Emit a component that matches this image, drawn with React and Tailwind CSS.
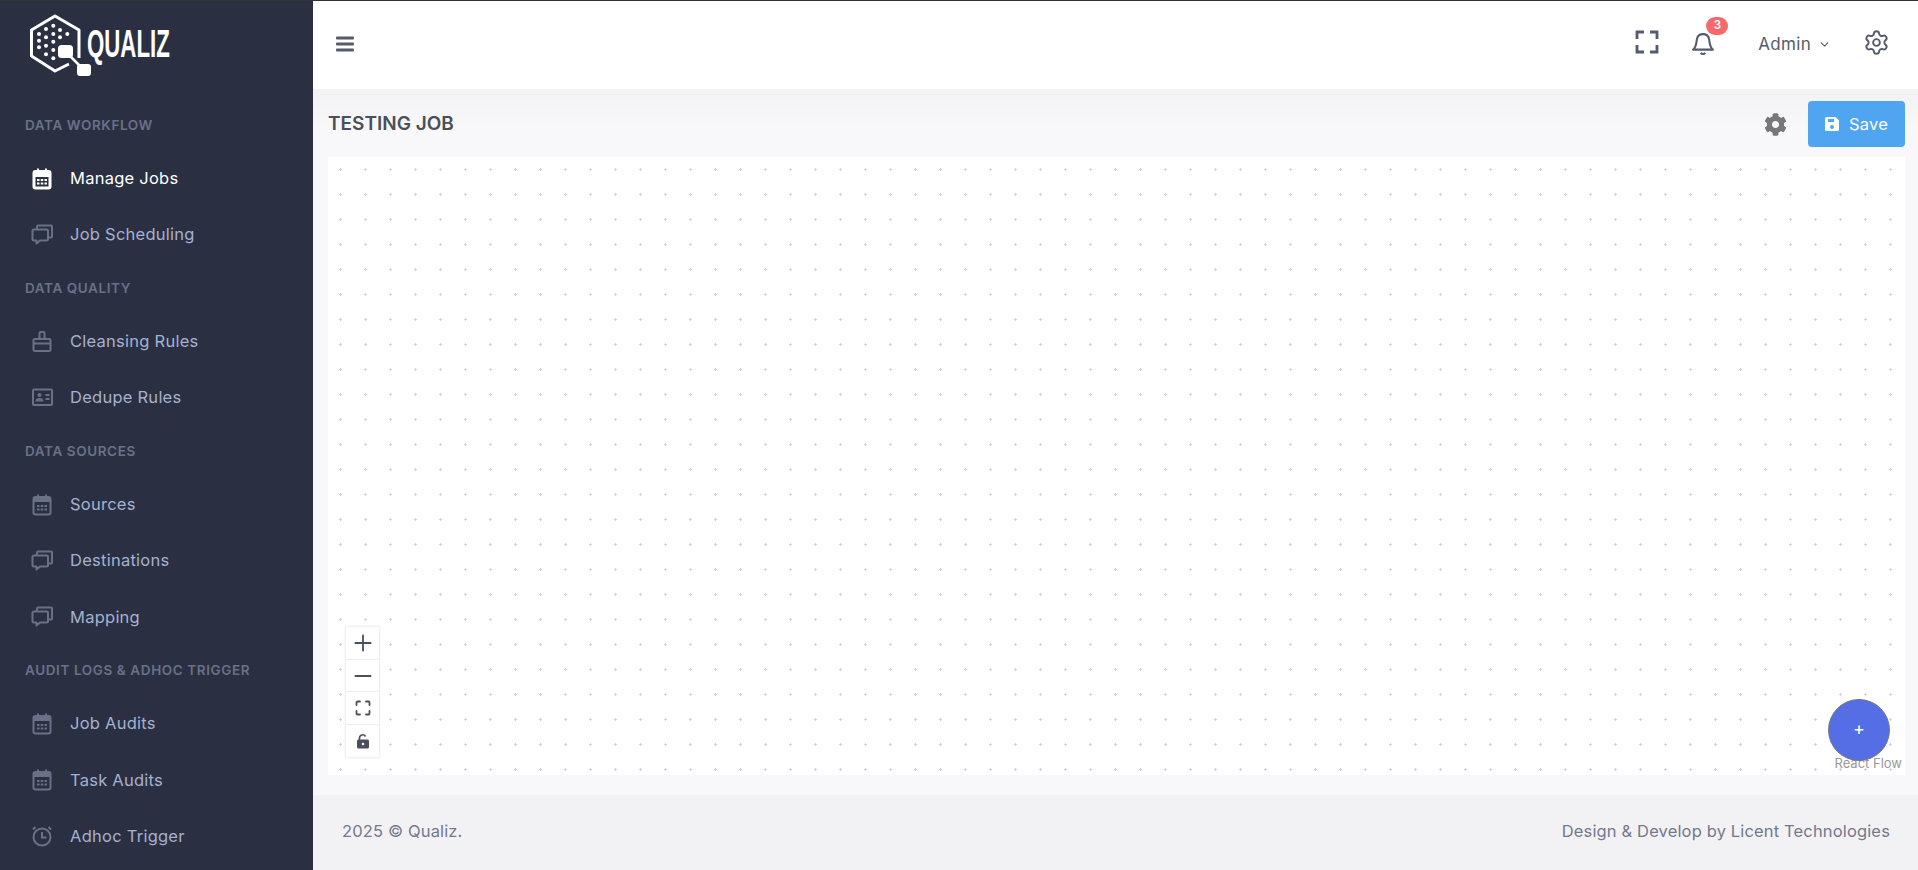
import React from "react";
import { ChevronDown, Plus, Minus, Settings } from "lucide-react";
import { FaCog } from "react-icons/fa";

const CalendarIcon = ({ solid }) => (
  <svg width="24" height="24" viewBox="0 0 24 24" fill="none">
    <rect x="3.500" y="4" width="17" height="17.500" rx="2" fill={solid ? "currentColor" : "none"} stroke="currentColor" strokeWidth="2" />
    <path d="M8 1.500v4M16 1.500v4" stroke="currentColor" strokeWidth="2" />
    {solid ? (
      <rect x="5.500" y="10" width="13" height="9.500" fill="#2a3042" />
    ) : (
      <rect x="4" y="5" width="16" height="4" fill="currentColor" />
    )}
    <path d="M7 13h2.500M10.750 13h2.500M14.500 13h2.500M7 16.500h2.500M10.750 16.500h2.500M14.500 16.500h2.500" stroke={solid ? "#fff" : "currentColor"} strokeWidth="1.800" />
  </svg>
);

const ChatIcon = () => (
  <svg width="24" height="24" viewBox="0 0 24 24" fill="none" stroke="currentColor" strokeWidth="2">
    <path d="M4 6.500h12.500a1.500 1.500 0 0 1 1.500 1.500v8a1.500 1.500 0 0 1-1.500 1.500H10l-3.500 3V17.500H4A1.500 1.500 0 0 1 2.500 16V8A1.500 1.500 0 0 1 4 6.500z" strokeLinejoin="round" />
    <path d="M7 6.500V3.500A1 1 0 0 1 8 2.500h13A1 1 0 0 1 22 3.500v10a1 1 0 0 1-1 1h-3" />
  </svg>
);

const BrushIcon = () => (
  <svg width="24" height="24" viewBox="0 0 24 24" fill="none" stroke="currentColor" strokeWidth="2">
    <rect x="3.500" y="9" width="17" height="12" rx="1.500" />
    <path d="M3.500 13.500h17M9.500 9V3.500a1.500 1.500 0 0 1 1.500-1.500h2a1.500 1.500 0 0 1 1.500 1.500V9" />
  </svg>
);

const CardIcon = () => (
  <svg width="24" height="24" viewBox="0 0 24 24" fill="none">
    <rect x="3" y="3.500" width="19" height="15.500" rx="1" stroke="currentColor" strokeWidth="2" />
    <circle cx="9.500" cy="9" r="2" fill="currentColor" />
    <path d="M5.500 15.500c0-2.500 1.500-3.500 4-3.500s4 1 4 3.500z" fill="currentColor" />
    <path d="M15.500 9h4M15.500 13h4" stroke="currentColor" strokeWidth="2" />
  </svg>
);

const AlarmIcon = () => (
  <svg width="24" height="24" viewBox="0 0 24 24" fill="none" stroke="currentColor" strokeWidth="2">
    <circle cx="12" cy="13" r="8.500" />
    <path d="M12 8v5.500h4.500M3 5.500l2.500-2.500M21 5.500L18.500 3" />
  </svg>
);

const logoDots = [[100, 62], [78, 72], [120, 75], [57, 87], [100, 87], [142, 87], [78, 97], [120, 97], [57, 107], [100, 110], [78, 122], [57, 127], [100, 135], [78, 148], [100, 160]];

const Logo = () => (
  <svg width="70" height="68" viewBox="0 0 70 68" fill="none">
    <path d="M51 44V16L27 2 3.500 16V42L27 57l14-7" stroke="#fff" strokeWidth="3" strokeLinejoin="round" />
    {logoDots.map(([x, y]) => (
      <circle key={`${x}-${y}`} cx={x / 3 - 8} cy={y / 3 - 9} r="2" fill="#fff" />
    ))}
    <rect x="30" y="31" width="15" height="13" rx="3.500" fill="#fff" />
    <rect x="49" y="50" width="14" height="12" rx="3" fill="#fff" />
    <path d="M40 40L54 54" stroke="#fff" strokeWidth="2.500" />
  </svg>
);

const menu = [
  { title: "DATA WORKFLOW", items: [["Manage Jobs", CalendarIcon, true], ["Job Scheduling", ChatIcon]] },
  { title: "DATA QUALITY", items: [["Cleansing Rules", BrushIcon], ["Dedupe Rules", CardIcon]] },
  { title: "DATA SOURCES", items: [["Sources", CalendarIcon], ["Destinations", ChatIcon], ["Mapping", ChatIcon]] },
  { title: "AUDIT LOGS & ADHOC TRIGGER", items: [["Job Audits", CalendarIcon], ["Task Audits", CalendarIcon], ["Adhoc Trigger", AlarmIcon]] },
];

const Sidebar = () => (
  <aside className="w-[313px] shrink-0 bg-[#2a3042] flex flex-col overflow-hidden">
    <div className="h-[99px] shrink-0 pl-[28px] pt-[13px] flex items-start relative">
      <Logo />
      <span className="absolute left-[87px] top-[20px] text-white text-[39px] leading-[46px] font-bold font-['Liberation_Sans'] scale-x-[0.57] origin-left">QUALIZ</span>
    </div>
    {menu.map((section) => (
      <div key={section.title}>
        <div className="h-[50.400px] flex items-center pl-[25px] text-[13.500px] font-semibold tracking-[0.6px] text-[#6a7187]">{section.title}</div>
        {section.items.map(([label, Icon, active]) => (
          <div key={label} className={`h-[56.300px] flex items-center pl-[30px] text-[16.500px] tracking-[0.25px] ${active ? "text-white" : "text-[#a6b0cf]"}`}>
            <span className={active ? "text-white w-[40px]" : "text-[#6a7187] w-[40px]"}><Icon solid={active} /></span>
            <span>{label}</span>
          </div>
        ))}
      </div>
    ))}
  </aside>
);

const Header = () => (
  <header className="h-[88px] shrink-0 bg-white flex items-center pl-[24px] text-[#555b6d]">
    <svg width="18" height="16" viewBox="0 0 18 16" className="ml-[-1px] mb-[2px]" fill="#555b6d">
      <rect y="0.500" width="18" height="3" rx="1" />
      <rect y="6.500" width="18" height="3" rx="1" />
      <rect y="12.500" width="18" height="3" rx="1" />
    </svg>
    <div className="ml-auto flex items-center mb-[6px]">
      <svg width="24" height="24" viewBox="0 0 24 24" fill="none" stroke="#555b6d" strokeWidth="2.800" className="mr-[30px]">
        <path d="M9 2H2v7M15 2h7v7M2 15v7h7M22 15v7h-7" />
      </svg>
      <div className="relative mr-[41px]">
        <svg width="28" height="28" viewBox="0 0 24 24" fill="none" stroke="#555b6d" strokeWidth="1.800">
          <path d="M3.500 18.500c1.500-1 2.500-3.500 3-7l.3-2a5.300 5.300 0 0 1 10.400 0l.3 2c.5 3.500 1.500 6 3 7z" strokeLinejoin="round" />
          <path d="M10 21.500c1 1 3 1 4 0" />
        </svg>
        <span className="absolute left-[17px] top-[-11px] w-[22px] h-[18px] rounded-full bg-[#f46a6a] text-white text-[11.500px] font-semibold flex items-center justify-center">3</span>
      </div>
      <span className="text-[17px] tracking-[0.3px] mr-[7px] mt-[5px]">Admin</span>
      <ChevronDown size={13} className="mr-[32px] mt-[5px]" />
      <Settings size={27} strokeWidth={1.700} className="mr-[28px]" />
    </div>
  </header>
);

const Canvas = () => (
  <div className="relative h-[618px] ml-[15px] mr-[13px] bg-white bg-[radial-gradient(#d2d2d6_1px,transparent_1.100px)] bg-[size:25px_25px]">
    <div className="absolute left-[18px] bottom-[18px] w-[33px] bg-white shadow-[0_0_2px_1px_rgba(0,0,0,0.08)] text-[#4a4f5c]">
      <button className="h-[33px] w-full flex items-center justify-center border-b border-[#eee]"><Plus size={26} strokeWidth={1.700} /></button>
      <button className="h-[32px] w-full flex items-center justify-center border-b border-[#eee]"><Minus size={26} strokeWidth={1.700} /></button>
      <button className="h-[33px] w-full flex items-center justify-center border-b border-[#eee]">
        <svg width="16" height="16" viewBox="0 0 16 16" fill="none" stroke="#4a4f5c" strokeWidth="1.800" strokeLinecap="round"><path d="M5 1.500H2.500a1 1 0 0 0-1 1V5M11 1.500h2.500a1 1 0 0 1 1 1V5M1.500 11v2.500a1 1 0 0 0 1 1H5M14.500 11v2.500a1 1 0 0 1-1 1H11" /></svg>
      </button>
      <button className="h-[32px] w-full flex items-center justify-center">
        <svg width="14" height="15" viewBox="0 0 14 15" fill="#4a4f5c"><path d="M1 7a1.500 1.500 0 0 1 1.500-1.500h9A1.500 1.500 0 0 1 13 7v6a1.500 1.500 0 0 1-1.500 1.500h-9A1.500 1.500 0 0 1 1 13z" /><path d="M3.500 6V4a3.200 3.200 0 0 1 6-1.500" fill="none" stroke="#4a4f5c" strokeWidth="1.600" /><circle cx="7" cy="10" r="1.300" fill="#fff" /></svg>
      </button>
    </div>
    <span className="absolute right-[3px] bottom-[4px] text-[13px] leading-[16px] text-[#999]">React Flow</span>
    <button className="absolute right-[15px] bottom-[14px] w-[62px] h-[62px] rounded-full bg-[#556ee6] border border-[#777] text-white text-[18px] flex items-center justify-center pb-[3px]">+</button>
  </div>
);

export default function App() {
  return (
    <div className="h-[870px] overflow-hidden flex flex-col font-['Inter',sans-serif] bg-white">
      <div className="h-px shrink-0 bg-[#333]"></div>
      <div className="flex flex-1 min-h-0">
        <Sidebar />
        <div className="flex-1 flex flex-col min-w-0 bg-[#f8f8fb]">
          <Header />
          <div className="flex-1 bg-gradient-to-b from-[#f2f2f5] to-[#f8f8fb] bg-[length:100%_40px] bg-no-repeat">
            <div className="h-[68px] flex items-center pl-[15px] pr-[13px] pt-[2px]">
              <h1 className="text-[19px] font-semibold text-[#495057]">TESTING JOB</h1>
              <FaCog size={23} color="#777" className="ml-auto mr-[21px]" />
              <button className="w-[97px] h-[46px] rounded-[4px] bg-[#50a5f1] text-white text-[16.500px] tracking-[0.25px] flex items-center justify-center gap-[10px]">
                <svg width="14" height="14" viewBox="0 0 14 14" fill="#fff"><path fillRule="evenodd" d="M1.500 0H10.500L14 3.500V12.500A1.500 1.500 0 0 1 12.500 14H1.500A1.500 1.500 0 0 1 0 12.500V1.500A1.500 1.500 0 0 1 1.500 0z M3 2v3h6V2z M7 8a2 2 0 1 0 0 4 2 2 0 0 0 0-4z" /></svg>
                Save
              </button>
            </div>
            <Canvas />
          </div>
          <footer className="h-[75px] shrink-0 bg-[#f2f2f5] flex items-center justify-between pl-[29px] pr-[28px] pb-[2px] text-[16.500px] tracking-[0.15px] text-[#74788d]">
            <span>2025 © Qualiz.</span>
            <span>Design &amp; Develop by Licent Technologies</span>
          </footer>
        </div>
      </div>
    </div>
  );
}
